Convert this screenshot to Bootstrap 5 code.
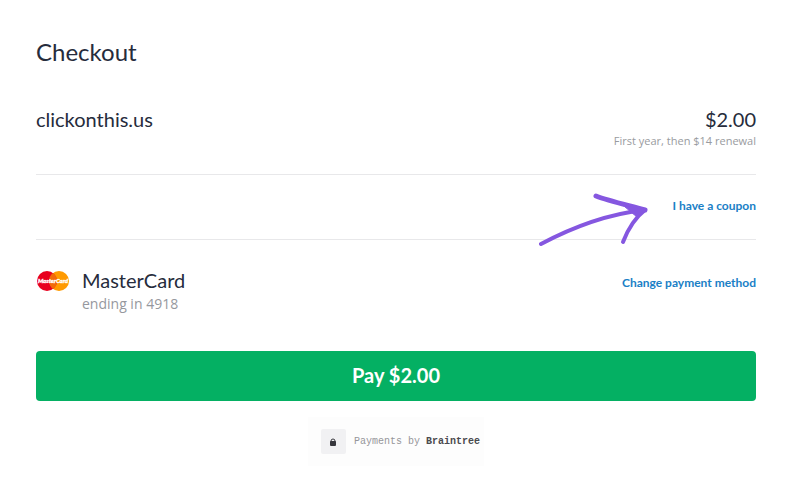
<!DOCTYPE html>
<html lang="en">
<head>
<meta charset="utf-8">
<meta name="viewport" content="width=device-width, initial-scale=1">
<title>Checkout</title>
<link href="https://cdn.jsdelivr.net/npm/bootstrap@5.3.0/dist/css/bootstrap.min.css" rel="stylesheet">
<style>
body { font-family: Lato, "Open Sans", sans-serif; color: #262c3c; background: #fff; }
.checkout { padding: 36px 36px 26px; }
.checkout h1 { font-size: 24px; line-height: 32px; font-weight: 400; margin: 0; }
.order { padding: 38px 0 24px; }
.big { font-size: 20px; line-height: 26px; }
.fine { font-family: "Open Sans", sans-serif; font-size: 11px; line-height: 18px; color: #999ba0; }
.ruled { border-color: #e8e8ea !important; }
.coupon { height: 65px; padding-bottom: 2px; }
.action { font-size: 12px; line-height: 18px; font-weight: 700; color: #1a80c6; text-decoration: none; }
.arrow { right: 107px; top: 17px; }
.method { padding: 27px 0 36px; }
.brand { margin-right: 12px; margin-top: 4px; }
.method-note { font-family: "Open Sans", sans-serif; font-size: 14px; line-height: 22px; color: #96989e; }
.method .action { margin-top: 7px; }
.btn.pay { background: #04b063; color: #fff; border: 0; border-radius: 4px; height: 50px; padding: 0 12px 2px; font-size: 20px; font-weight: 700; }
.btn.pay:hover { background: #049c58; color: #fff; }
.provider { margin-top: 16px; padding: 12px 4px 12px 13px; background: #fdfdfd; }
.lock-box { width: 25px; height: 25px; background: #f1f1f3; border-radius: 2px; margin-right: 8px; }
.provider-text { font-family: "Liberation Mono", monospace; font-size: 10px; line-height: 24px; color: #96969a; }
.provider-text strong { color: #4a4a4e; }
</style>
</head>
<body>
<main class="checkout">
  <h1>Checkout</h1>
  <section class="order d-flex justify-content-between border-bottom ruled">
    <div class="big">clickonthis.us</div>
    <div class="text-end">
      <div class="big">$2.00</div>
      <div class="fine">First year, then $14 renewal</div>
    </div>
  </section>
  <section class="coupon position-relative d-flex align-items-center justify-content-end border-bottom ruled">
    <svg class="arrow position-absolute" width="110" height="56" viewBox="0 0 110 56" fill="none" stroke="#8557e0" stroke-linecap="round" stroke-linejoin="round" aria-hidden="true">
      <path d="M2 52C32 36 64 23 104 18" stroke-width="4"/>
      <path d="M57 4C70 9 88 13 106 18" stroke-width="5"/>
      <path d="M106 18C97 25 89 37 84 50" stroke-width="4"/>
      <path d="M84 13L108 18L98 25L92 20Z" fill="#8557e0" stroke-width="1"/>
    </svg>
    <a class="action" href="#coupon">I have a coupon</a>
  </section>
  <section class="method d-flex justify-content-between align-items-start">
    <div class="d-flex align-items-start">
      <svg class="brand" width="34" height="20" viewBox="0 0 34 20" role="img" aria-label="MasterCard">
        <circle cx="23" cy="10" r="10" fill="#ff9a00"/>
        <circle cx="11" cy="10" r="10" fill="#e8001e"/>
        <path d="M17 2A10 10 0 0 1 17 18A10 10 0 0 1 17 2Z" fill="#f26a0a"/>
        <text x="17" y="12" text-anchor="middle" font-family="Lato, sans-serif" font-size="6" font-weight="900" font-style="italic" fill="#fff" stroke="#fff" stroke-width=".3">MasterCard</text>
      </svg>
      <div>
        <div class="big">MasterCard</div>
        <div class="method-note">ending in 4918</div>
      </div>
    </div>
    <a class="action" href="#payment">Change payment method</a>
  </section>
  <button type="button" class="btn pay w-100">Pay $2.00</button>
  <div class="d-flex justify-content-center">
    <div class="provider d-flex align-items-center">
      <span class="lock-box d-flex align-items-center justify-content-center">
        <svg width="6" height="8" viewBox="0 0 6 8" aria-hidden="true"><path d="M1 4V3a2 2 0 0 1 4 0v1" fill="none" stroke="#36363c"/><rect y="3" width="6" height="5" rx="1" fill="#36363c"/></svg>
      </span>
      <span class="provider-text">Payments by <strong>Braintree</strong></span>
    </div>
  </div>
</main>
<script src="https://cdn.jsdelivr.net/npm/bootstrap@5.3.0/dist/js/bootstrap.bundle.min.js"></script>
</body>
</html>
